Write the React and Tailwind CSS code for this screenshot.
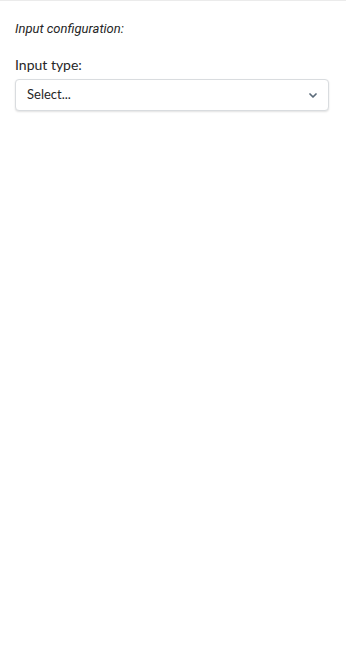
const Chevron = () => (
  <svg width="8" height="5" viewBox="0 0 8 5" fill="none">
    <path d="M1 1 L4 4 L7 1" stroke="#5b6b7a" strokeWidth="1.7" strokeLinecap="round" strokeLinejoin="round" />
  </svg>
);

export default function App() {
  return (
    <div className="min-h-[651px] w-full bg-white border-t border-[#ebebeb]">
      <div className="pl-[15px] pr-[17px] pt-[18px]">
        <p className="text-[13px] leading-[20px] italic text-[#262626] font-['Roboto',sans-serif]">
          Input configuration:
        </p>
        <div className="mt-[16px]">
          <label className="block text-[14px] leading-[20px] text-[#262626] font-['Lato',sans-serif]">
            Input type:
          </label>
          <button className="mt-[4px] w-full h-[32px] flex items-center justify-between pl-[11px] pr-[11px] bg-white border border-[#d9dcdf] rounded-[4px] shadow-[0_1px_2px_rgba(0,0,0,0.12)]">
            <span className="text-[13px] text-[#262626] font-['Lato',sans-serif]">Select...</span>
            <Chevron />
          </button>
        </div>
      </div>
    </div>
  );
}
